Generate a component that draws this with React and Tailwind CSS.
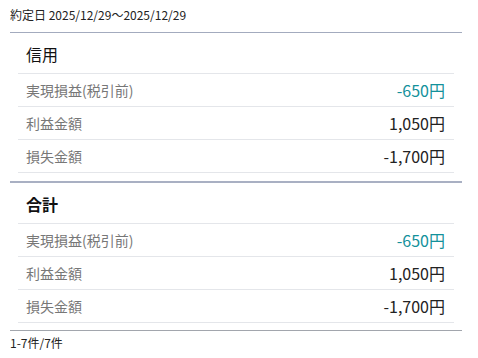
import React from 'react';

const sections = [
  {
    title: '信用',
    bold: false,
    rows: [
      { label: '実現損益(税引前)', value: '-650円', teal: true },
      { label: '利益金額', value: '1,050円' },
      { label: '損失金額', value: '-1,700円' },
    ],
  },
  {
    title: '合計',
    bold: true,
    rows: [
      { label: '実現損益(税引前)', value: '-650円', teal: true },
      { label: '利益金額', value: '1,050円' },
      { label: '損失金額', value: '-1,700円' },
    ],
  },
];

export default function App() {
  return (
    <div
      className="w-[478px] h-[358px] bg-white pl-[10px] pr-[16px] overflow-hidden"
      style={{ fontFamily: '"Noto Sans CJK JP", "Noto Sans", sans-serif' }}
    >
      <div className="h-[33px] flex items-center border-b border-[#a3abbe] text-[12px] text-[#222] pb-[2px]">
        約定日 2025/12/29〜2025/12/29
      </div>

      {sections.map((s, i) => (
        <div
          key={s.title}
          className={
            i === 0
              ? 'px-[8px] pb-[8px] border-b-2 border-[#a9b0c3]'
              : 'px-[8px] pb-[7px] border-b border-[#a2a6ad]'
          }
        >
          <div
            className={`h-[41px] flex items-center pl-[8px] pt-[2px] border-b border-[#e4e6ea] text-[16px] text-[#111] ${
              s.bold ? 'font-bold' : ''
            }`}
          >
            {s.title}
          </div>
          {s.rows.map((r) => (
            <div
              key={r.label}
              className="h-[33px] flex items-center justify-between pl-[8px] pr-[9px] border-b border-[#e4e6ea]"
            >
              <span className="text-[14px] text-[#777]">{r.label}</span>
              <span className={`text-[16px] ${r.teal ? 'text-[#13919b]' : 'text-[#222]'}`}>
                {r.value}
              </span>
            </div>
          ))}
        </div>
      ))}

      <div className="pt-[3px] text-[12px] text-[#222]">1-7件/7件</div>
    </div>
  );
}
